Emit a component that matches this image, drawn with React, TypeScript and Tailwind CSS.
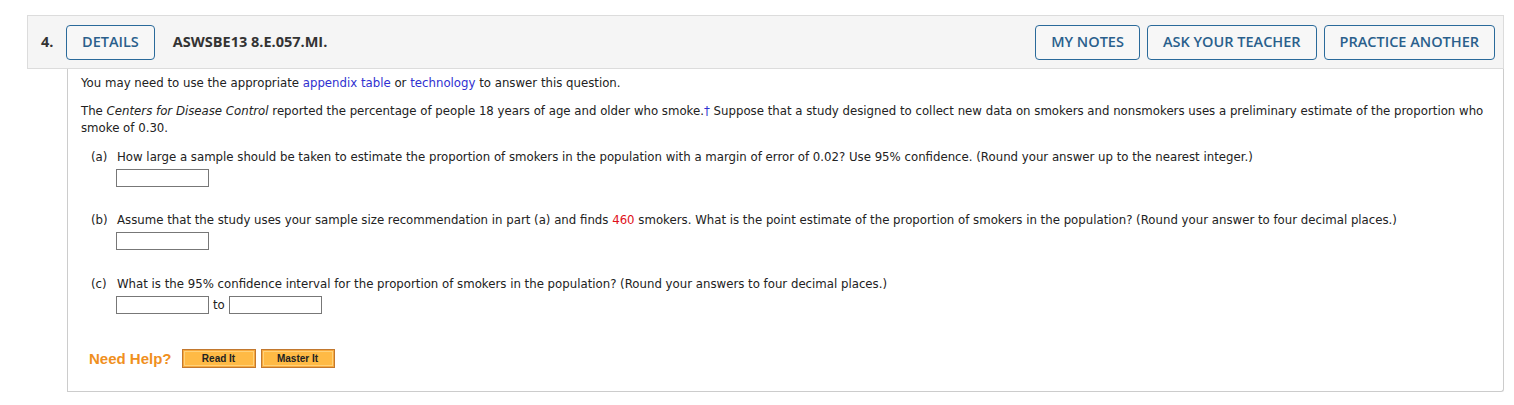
import React from "react";

const body = { fontFamily: '"DejaVu Sans", Verdana, sans-serif' };
const os = { fontFamily: '"Open Sans", sans-serif' };

function HBtn({ children }: { children: React.ReactNode }) {
  return (
    <button
      className="h-[35px] px-[15px] border border-[#2a6a9a] rounded-[4px] text-[14.5px] font-semibold text-[#2a5f8c] bg-[#f7f7f7] leading-none"
      style={os}
    >
      {children}
    </button>
  );
}

function Box({ w = 93 }: { w?: number }) {
  return <div className="h-[18px] border border-[#777] bg-white" style={{ width: w }} />;
}

function HelpBtn({ children, w }: { children: React.ReactNode; w: string }) {
  return (
    <div className={`${w} h-[19px] border border-[#c2782e] bg-[#f7a93d] p-[1px]`}>
      <div className="h-full border border-[#ffd27a] bg-[#ffba45] flex items-center justify-center text-[10px] font-bold text-[#222]" style={{ fontFamily: '"Liberation Sans", Arial, sans-serif' }}>
        {children}
      </div>
    </div>
  );
}

export default function App() {
  return (
    <div className="bg-white w-[1514px] h-[405px] pt-[15px] pl-[27px] pr-[10px]">
      <div className="h-[54px] bg-[#f5f5f5] border border-[#dcdcdc] flex items-center pl-[13px] pr-[8px]" style={os}>
        <span className="text-[14.5px] font-bold text-[#333] w-[25px]">4.</span>
        <HBtn>DETAILS</HBtn>
        <span className="ml-[18px] text-[14.5px] font-bold text-[#333]">ASWSBE13 8.E.057.MI.</span>
        <div className="ml-auto flex gap-[7px]">
          <HBtn>MY NOTES</HBtn>
          <HBtn>ASK YOUR TEACHER</HBtn>
          <HBtn>PRACTICE ANOTHER</HBtn>
        </div>
      </div>
      <div className="ml-[40px] h-[323px] border-l border-r border-b border-[#cccccc] rounded-br-[3px] pl-[13px] pr-[14px] pt-[5px] text-[11.75px] text-[#222] leading-[17px]" style={body}>
        <p className="pt-[1px]">
          You may need to use the appropriate <span className="text-[#3030d0]">appendix table</span> or <span className="text-[#3030d0]">technology</span> to answer this question.
        </p>
        <p className="mt-[11px]">
          The <i>Centers for Disease Control</i> reported the percentage of people 18 years of age and older who smoke.<span className="text-[#3030d0]">†</span> Suppose that a study designed to collect new data on smokers and nonsmokers uses a preliminary estimate of the proportion who smoke of 0.30.
        </p>
        <div className="mt-[12px] pl-[10px]">
          <div className="flex">
            <span className="w-[26px]">(a)</span>
            <span>How large a sample should be taken to estimate the proportion of smokers in the population with a margin of error of 0.02? Use 95% confidence. (Round your answer up to the nearest integer.)</span>
          </div>
          <div className="ml-[25px] mt-[3px]"><Box /></div>
          <div className="flex mt-[25px]">
            <span className="w-[26px]">(b)</span>
            <span>Assume that the study uses your sample size recommendation in part (a) and finds <span className="text-[#e0101a]">460</span> smokers. What is the point estimate of the proportion of smokers in the population? (Round your answer to four decimal places.)</span>
          </div>
          <div className="ml-[25px] mt-[3px]"><Box /></div>
          <div className="flex mt-[26px]">
            <span className="w-[26px]">(c)</span>
            <span>What is the 95% confidence interval for the proportion of smokers in the population? (Round your answers to four decimal places.)</span>
          </div>
          <div className="ml-[25px] mt-[3px] flex items-center gap-[4px]">
            <Box /><span>to</span><Box />
          </div>
        </div>
        <div className="mt-[35px] pl-[8px] flex items-center">
          <span className="text-[15px] font-bold text-[#f0901e] mr-[10px]" style={{ fontFamily: '"Liberation Sans", Arial, sans-serif' }}>Need Help?</span>
          <HelpBtn w="w-[74px]">Read It</HelpBtn>
          <div className="w-[5px]" />
          <HelpBtn w="w-[74px]">Master It</HelpBtn>
        </div>
      </div>
    </div>
  );
}
